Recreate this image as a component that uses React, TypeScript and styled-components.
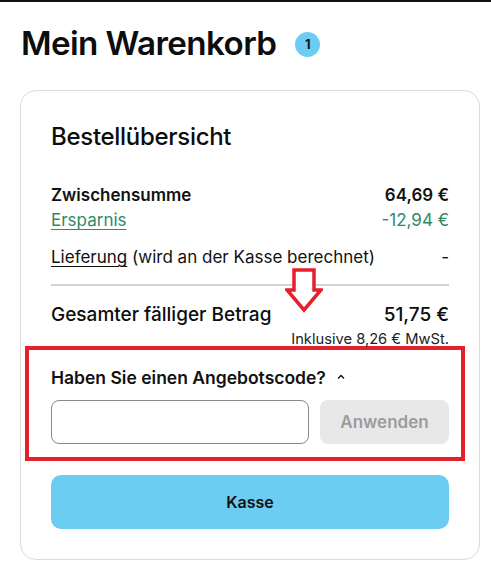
import React from 'react'
import styled, { createGlobalStyle } from 'styled-components'

const GlobalStyle = createGlobalStyle`
  html, body {
    margin: 0;
    padding: 0;
    background: #fff;
  }
  body {
    font-family: Inter, 'Noto Sans', sans-serif;
    color: #111;
  }
`

const Page = styled.div`
  border-top: 2px solid #111;
  padding: 0 11px 0 20px;
`

const Header = styled.header`
  display: flex;
  align-items: center;
  gap: 19px;
  height: 88px;
  padding-left: 1px;
  padding-bottom: 2px;
  box-sizing: border-box;
`

const Title = styled.h1`
  margin: -4px 0 0;
  font-size: 33.2px;
  font-weight: 600;
  letter-spacing: -0.6px;
  color: #0d0d0d;
`

const Badge = styled.span`
  display: inline-flex;
  align-items: center;
  justify-content: center;
  width: 25px;
  height: 25px;
  border-radius: 50%;
  background: #6ccdf3;
  font-size: 13px;
  font-weight: 700;
  color: #111;
  margin-top: -2px;
`

const Card = styled.section`
  position: relative;
  border: 1px solid #dcdcdc;
  border-radius: 16px;
  padding: 30px;
`

const CardTitle = styled.h2`
  margin: 0 0 30px;
  font-size: 24px;
  font-weight: 500;
  letter-spacing: -0.3px;
  color: #0d0d0d;
  line-height: 32px;
`

const Row = styled.div<{ $tone?: 'default' | 'green'; $bold?: boolean }>`
  display: flex;
  justify-content: space-between;
  align-items: baseline;
  font-size: 17px;
  line-height: 25px;
  font-weight: ${p => (p.$bold ? 600 : 400)};
  color: ${p => (p.$tone === 'green' ? '#2f8a67' : '#111')};
`

const Link = styled.span`
  text-decoration: underline;
  text-underline-offset: 3px;
  text-decoration-thickness: 1px;
`

const Spacer = styled.div<{ $h: number }>`
  height: ${p => p.$h}px;
`

const Divider = styled.hr`
  border: 0;
  border-top: 2px solid #d4d4d4;
  margin: 14px 0 15px;
`

const TotalRow = styled.div`
  display: flex;
  justify-content: space-between;
  align-items: baseline;
  font-size: 19px;
  line-height: 28px;
  font-weight: 500;
  color: #0d0d0d;
`

const Vat = styled.div`
  text-align: right;
  font-size: 14.7px;
  line-height: 20px;
  color: #222;
`

const Promo = styled.div`
  margin: -3px -16px 0 -26px;
  padding: 16px 12px 13px 22px;
  border: 4px solid #e3202c;
`

const PromoToggle = styled.div`
  display: flex;
  align-items: center;
  gap: 10px;
  font-size: 17.5px;
  font-weight: 600;
  line-height: 24px;
  color: #111;
  margin-bottom: 10px;
`

const Caret = styled.svg`
  width: 10px;
  height: 10px;
  margin-top: -2px;
`

const PromoForm = styled.div`
  display: flex;
  gap: 11px;
`

const CodeInput = styled.input`
  flex: 1;
  min-width: 0;
  height: 44px;
  box-sizing: border-box;
  border: 1px solid #8a8a8a;
  border-radius: 8px;
  padding: 0 12px;
  font: inherit;
`

const ApplyButton = styled.button`
  width: 129px;
  height: 44px;
  border: 0;
  border-radius: 8px;
  background: #e8e8e8;
  color: #9c9c9c;
  font-family: inherit;
  font-size: 17px;
  font-weight: 600;
`

const CheckoutButton = styled.button`
  display: block;
  width: 100%;
  height: 54px;
  margin-top: 14px;
  border: 0;
  border-radius: 10px;
  background: #6ccdf3;
  color: #111;
  font-family: inherit;
  font-size: 16px;
  font-weight: 600;
`

const Arrow = styled.svg`
  position: absolute;
  left: 264px;
  top: 177px;
  width: 38px;
  height: 46px;
`

const App: React.FC = () => (
  <>
    <GlobalStyle />
    <Page>
      <Header>
        <Title>Mein Warenkorb</Title>
        <Badge>1</Badge>
      </Header>
      <Card>
        <CardTitle>Bestellübersicht</CardTitle>
        <Row $bold>
          <span>Zwischensumme</span>
          <span>64,69 €</span>
        </Row>
        <Row $tone="green">
          <Link>Ersparnis</Link>
          <span>-12,94 €</span>
        </Row>
        <Spacer $h={12} />
        <Row>
          <span>
            <Link>Lieferung</Link> (wird an der Kasse berechnet)
          </span>
          <span>-</span>
        </Row>
        <Divider />
        <TotalRow>
          <span>Gesamter fälliger Betrag</span>
          <span>51,75 €</span>
        </TotalRow>
        <Vat>Inklusive 8,26 € MwSt.</Vat>
        <Promo>
          <PromoToggle>
            Haben Sie einen Angebotscode?
            <Caret viewBox="0 0 10 10">
              <path d="M2 6.5 L5 3.5 L8 6.5" fill="none" stroke="#111" strokeWidth="1.4" />
            </Caret>
          </PromoToggle>
          <PromoForm>
            <CodeInput aria-label="Angebotscode" />
            <ApplyButton disabled>Anwenden</ApplyButton>
          </PromoForm>
        </Promo>
        <CheckoutButton>Kasse</CheckoutButton>
        <Arrow viewBox="0 0 38 46">
          <path
            d="M9 2 H29 V22 H36 L19 42 L2 22 H9 Z"
            fill="#fff"
            stroke="#e3202c"
            strokeWidth="3.5"
            strokeLinejoin="miter"
          />
        </Arrow>
      </Card>
    </Page>
  </>
)

export default App
